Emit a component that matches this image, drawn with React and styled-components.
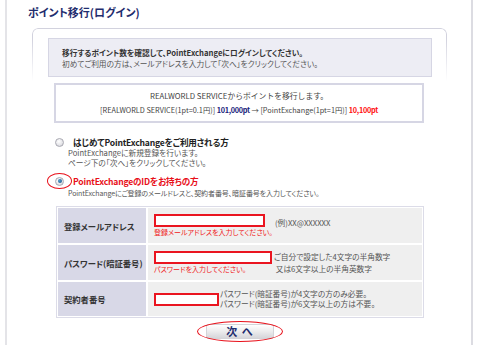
import React from "react";
import styled, { createGlobalStyle } from "styled-components";

const Global = createGlobalStyle`
  html, body { margin: 0; padding: 0; background: #fff; }
  body {
    font-family: "Noto Sans CJK JP", "Noto Sans", sans-serif;
    font-feature-settings: "palt";
    color: #444;
  }
  * { box-sizing: border-box; }
`;

const Frame = styled.div`
  margin-left: 5px;
  width: 468px;
  height: 345px;
  border-left: 2px solid #e4e4e8;
  border-right: 2px solid #dcdce2;
  padding-top: 5px;
  overflow: hidden;
`;

const Title = styled.h1`
  margin: 0 0 0 21px;
  font-size: 11px;
  line-height: 14px;
  font-weight: bold;
  color: #1f2d6e;
`;

const Card = styled.div`
  position: relative;
  margin: 9px 0 0 25px;
  width: 415px;
  padding: 10px 0 0 16px;
  &::before {
    content: "";
    position: absolute;
    left: 0;
    top: 0;
    right: 0;
    height: 52px;
    border: 1px solid #d2d2de;
    border-bottom: none;
    border-radius: 6px 6px 0 0;
    -webkit-mask-image: linear-gradient(to bottom, #000 20%, transparent 100%);
    mask-image: linear-gradient(to bottom, #000 20%, transparent 100%);
    pointer-events: none;
  }
`;

const Notice = styled.div`
  width: 384px;
  background: #ededf4;
  border: 1px solid #d6d6e4;
  padding: 8px 0 7px 13px;
  font-size: 7.7px;
  line-height: 11px;
`;

const Strong = styled.div`
  font-weight: bold;
  color: #333;
`;

const Plain = styled.div`
  color: #555;
`;

const Points = styled.div`
  margin: 6px 0 0 6px;
  width: 370px;
  border: 2px solid #d6d6e4;
  padding: 4px 0;
  text-align: center;
  font-size: 7.3px;
  line-height: 14px;
  color: #444;
`;

const PointsLine = styled.div`
  font-size: ${(p) => (p.$wide ? 7.8 : 7.3)}px;
  font-feature-settings: ${(p) => (p.$wide ? "normal" : "\"palt\"")};
`;

const Amount = styled.span`
  font-weight: bold;
  font-size: 7.3px;
  letter-spacing: -0.3px;
  color: ${(p) => (p.$red ? "#ff1010" : "#1a237a")};
`;

const OptionHead = styled.div`
  display: flex;
  align-items: center;
  gap: 9px;
  height: 12px;
  margin: ${(p) => p.$mt}px 0 0 7px;
`;

const RadioWrap = styled.span`
  position: relative;
  display: inline-block;
  width: 9px;
  height: 9px;
`;

const Radio = styled.span`
  display: block;
  width: 9px;
  height: 9px;
  border-radius: 50%;
  border: 1px solid #a9a9b2;
  background: radial-gradient(circle at 40% 35%, #ffffff 0%, #e4e4e8 60%, #c8c8ce 100%);
  position: relative;
  &::after {
    content: "";
    display: ${(p) => (p.$checked ? "block" : "none")};
    position: absolute;
    left: 1.5px;
    top: 1.5px;
    width: 4px;
    height: 4px;
    border-radius: 50%;
    background: radial-gradient(circle at 40% 40%, #4f9fd0 0%, #1b4f80 100%);
  }
`;

const Ellipse = styled.span`
  position: absolute;
  left: ${(p) => p.$l}px;
  top: ${(p) => p.$t}px;
  width: ${(p) => p.$w}px;
  height: ${(p) => p.$h}px;
  border: 1.5px solid #e8101a;
  border-radius: 50%;
  pointer-events: none;
`;

const OptionLabel = styled.span`
  font-size: 8.6px;
  line-height: 12px;
  font-weight: bold;
  letter-spacing: -0.2px;
  color: ${(p) => (p.$red ? "#e8101a" : "#222")};
`;

const OptionSub = styled.div`
  margin: ${(p) => p.$mt || 0}px 0 0 20px;
  font-size: ${(p) => p.$fs || 7.7}px;
  letter-spacing: ${(p) => p.$ls || 0}px;
  line-height: 10px;
  color: #555;
`;

const Table = styled.div`
  margin: 8px 0 0 8px;
  width: 368px;
  display: grid;
  grid-template-columns: 88px 1fr;
  grid-template-rows: 35px 35px 34px;
  gap: 2px;
  padding: 1px;
  border: 1px solid #dcdce8;
  background: #fff;
`;

const Head = styled.div`
  background: #d8d8e7;
  display: flex;
  align-items: center;
  padding-left: 6px;
  font-size: 8.3px;
  font-weight: bold;
  color: #333;
`;

const Cell = styled.div`
  background: #efefef;
  display: flex;
  align-items: center;
  padding-left: 6px;
`;

const Field = styled.div`
  display: flex;
  flex-direction: column;
  width: ${(p) => p.$w}px;
  flex: none;
`;

const Input = styled.input`
  width: 100%;
  height: 13px;
  border: 2px solid #ea1520;
  background: #fff;
  padding: 0;
  margin: 0;
  outline: none;
`;

const Error = styled.div`
  font-size: 7px;
  line-height: 10px;
  color: #f02020;
  white-space: nowrap;
`;

const Hint = styled.div`
  margin-left: ${(p) => p.$ml}px;
  margin-top: ${(p) => p.$mt || 0}px;
  font-size: 7.7px;
  line-height: ${(p) => p.$lh || 11}px;
  color: #555;
  white-space: nowrap;
`;

const ButtonRow = styled.div`
  display: flex;
  justify-content: center;
  margin-top: 6px;
  width: 384px;
`;

const ButtonWrap = styled.span`
  position: relative;
  display: inline-flex;
`;

const NextButton = styled.button`
  display: flex;
  align-items: center;
  justify-content: center;
  width: 68px;
  height: 15px;
  padding: 0;
  border: 1px solid #d4d4d8;
  border-radius: 2px;
  background: linear-gradient(to bottom, #ffffff 0%, #eeeeef 45%, #d6d6da 100%);
  font-family: "Noto Sans CJK JP", sans-serif;
  font-size: 11px;
  line-height: 1;
  font-weight: bold;
  color: #1f2d6e;
  letter-spacing: 1px;
`;

export default function App() {
  return (
    <>
      <Global />
      <Frame>
        <Title>ポイント移行(ログイン)</Title>
        <Card>
          <Notice>
            <Strong>移行するポイント数を確認して、PointExchangeにログインしてください。</Strong>
            <Plain>初めてご利用の方は、メールアドレスを入力して「次へ」をクリックしてください。</Plain>
          </Notice>
          <Points>
            <PointsLine $wide>REALWORLD SERVICEからポイントを移行します。</PointsLine>
            <PointsLine>
              [REALWORLD SERVICE(1pt=0.1円)] <Amount>101,000pt</Amount> → [PointExchange(1pt=1円)]{" "}
              <Amount $red>10,100pt</Amount>
            </PointsLine>
          </Points>

          <OptionHead $mt={13}>
            <RadioWrap>
              <Radio />
            </RadioWrap>
            <OptionLabel>はじめてPointExchangeをご利用される方</OptionLabel>
          </OptionHead>
          <OptionSub>
            <div>PointExchangeに新規登録を行います。</div>
            <div>ページ下の「次へ」をクリックしてください。</div>
          </OptionSub>

          <OptionHead $mt={7}>
            <RadioWrap>
              <Radio $checked />
              <Ellipse $l={-8} $t={-4} $w={25} $h={16} />
            </RadioWrap>
            <OptionLabel $red>PointExchangeのIDをお持ちの方</OptionLabel>
          </OptionHead>
          <OptionSub $mt={1} $fs={7} $ls={-0.1}>
            PointExchangeにご登録のメールドレスと、契約者番号、暗証番号を入力してください。
          </OptionSub>

          <Table>
            <Head>登録メールアドレス</Head>
            <Cell>
              <Field $w={111}>
                <Input />
                <Error>登録メールアドレスを入力してください。</Error>
              </Field>
              <Hint $ml={10} $mt={-6}>(例)XX@XXXXXX</Hint>
            </Cell>
            <Head>パスワード(暗証番号)</Head>
            <Cell>
              <Field $w={118}>
                <Input />
                <Error>パスワードを入力してください。</Error>
              </Field>
              <Hint $ml={2} $lh={12}>
                <div>ご自分で設定した4文字の半角数字</div>
                <div>&nbsp;又は6文字以上の半角英数字</div>
              </Hint>
            </Cell>
            <Head>契約者番号</Head>
            <Cell>
              <Field $w={65}>
                <Input />
              </Field>
              <Hint $ml={1} $lh={10}>
                <div>パスワード(暗証番号)が4文字の方のみ必要。</div>
                <div>パスワード(暗証番号)が6文字以上の方は不要。</div>
              </Hint>
            </Cell>
          </Table>

          <ButtonRow>
            <ButtonWrap>
              <NextButton type="button">次 へ</NextButton>
              <Ellipse $l={-9} $t={-3} $w={86} $h={21} />
            </ButtonWrap>
          </ButtonRow>
        </Card>
      </Frame>
    </>
  );
}
